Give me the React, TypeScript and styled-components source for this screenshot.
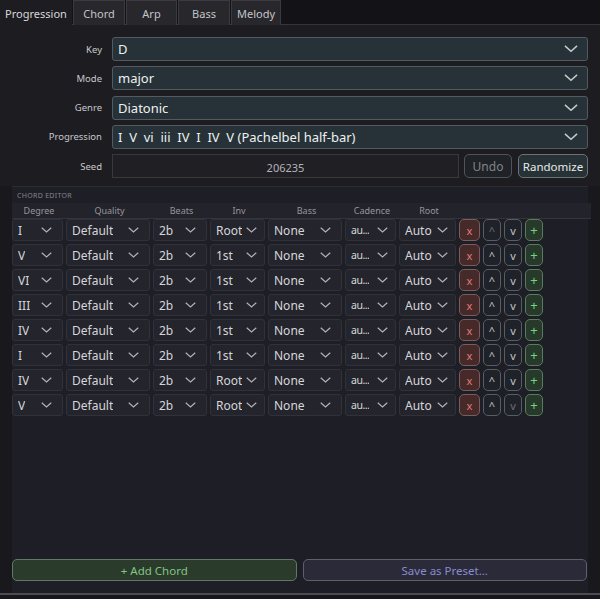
import { Fragment } from 'react';
import styled, { createGlobalStyle } from 'styled-components';

const GlobalStyle = createGlobalStyle`
    html, body {
        margin: 0;
        padding: 0;
        background: #18181c;
    }
    * {
        box-sizing: border-box;
    }
`;

const Window = styled.div`
    width: 600px;
    height: 599px;
    display: flex;
    flex-direction: column;
    background: #18181c;
    font-family: "Noto Sans", "Open Sans", sans-serif;
    overflow: hidden;
`;

const TabBar = styled.div`
    height: 25px;
    display: flex;
    background: #131317;
    border-bottom: 1px solid #34343a;
`;

const Tab = styled.div<{ $active?: boolean; $w: number }>`
    width: ${(p) => p.$w}px;
    height: 25px;
    margin-right: 1px;
    display: flex;
    align-items: center;
    justify-content: center;
    font-size: 11px;
    color: ${(p) => (p.$active ? '#d8d8dc' : '#c4c4c8')};
    background: ${(p) => (p.$active ? '#1c1c21' : '#27272c')};
    border: 1px solid ${(p) => (p.$active ? '#1c1c21' : '#3a3a40')};
    border-bottom: none;
`;

const Body = styled.div`
    flex: 1;
    display: flex;
    flex-direction: column;
    background: #19191d;
    border-bottom: 2px solid #4c4c52;
    margin-bottom: 4px;
`;

const Form = styled.div`
    display: grid;
    grid-template-columns: 102px 1fr;
    column-gap: 10px;
    row-gap: 5.25px;
    padding: 12px 12px 8px 0;
    background: #1c1c21;
`;

const Label = styled.div`
    display: flex;
    align-items: center;
    justify-content: flex-end;
    height: 24px;
    font-size: 9.5px;
    color: #c8c8cc;
`;

const SelectBox = styled.div`
    height: 24px;
    display: flex;
    align-items: center;
    justify-content: space-between;
    padding: 0 9px 0 5px;
    background: #263238;
    border: 1px solid #525a62;
    border-radius: 3px;
    font-size: 13px;
    color: #eef0f0;
`;

const SelectText = styled.span`
    white-space: pre;
`;

const SeedRow = styled.div`
    display: flex;
    gap: 5px;
    height: 24px;
`;

const SeedInput = styled.div`
    width: 347px;
    display: flex;
    align-items: center;
    justify-content: center;
    padding-top: 3px;
    background: #1f1f24;
    border: 1px solid #38383e;
    font-size: 11px;
    color: #b4b4b8;
`;

const SmallButton = styled.div<{ $w: number; $primary?: boolean }>`
    width: ${(p) => p.$w}px;
    margin-left: ${(p) => (p.$primary ? '1px' : '0')};
    display: flex;
    align-items: center;
    justify-content: center;
    border-radius: 5px;
    font-size: ${(p) => (p.$primary ? '11.5px' : '12px')};
    background: ${(p) => (p.$primary ? '#263236' : '#1f2226')};
    border: 1px solid ${(p) => (p.$primary ? '#6a7276' : '#4e5458')};
    color: ${(p) => (p.$primary ? '#e8eaea' : '#80868a')};
`;

const Editor = styled.div`
    flex: 1;
    margin: 0 12px;
    display: flex;
    flex-direction: column;
    background: #1e1e26;
    border-top: 1px solid #2c2c33;
`;

const EditorTitle = styled.div`
    height: 16px;
    padding: 4px 0 0 5px;
    font-size: 7px;
    letter-spacing: 0.3px;
    color: #85858c;
`;

const Grid = styled.div`
    display: grid;
    grid-template-columns: 51px 84px 54px 55px 74px 51px 57px auto;
    column-gap: 3px;
    row-gap: 3px;
`;

const Row = styled.div`
    display: contents;
`;

const HeaderCell = styled.div`
    height: 16px;
    margin-right: -3px;
    margin-bottom: -3px;
    display: flex;
    align-items: center;
    justify-content: center;
    font-size: 9px;
    color: #96969c;
    background: #23232b;
    border-bottom: 1px solid #34343c;
`;

const Cell = styled.div<{ $tight?: boolean }>`
    height: 22px;
    display: flex;
    align-items: center;
    justify-content: space-between;
    padding: 0 ${(p) => (p.$tight ? 7 : 10)}px 0 5px;
    background: #24242c;
    border: 1px solid #31313a;
    border-radius: 3px;
    font-size: 12px;
    color: #d6d6da;
    white-space: nowrap;
    overflow: hidden;
`;

const CellText = styled.span<{ $small?: boolean }>`
    overflow: hidden;
    font-size: ${(p) => (p.$small ? '10.5px' : 'inherit')};
    letter-spacing: ${(p) => (p.$small ? '-0.5px' : '0')};
`;

const Actions = styled.div`
    display: flex;
    gap: 3px;
`;

type Kind = 'del' | 'move' | 'add';

const ActionButton = styled.div<{ $kind: Kind; $dim?: boolean; $w: number }>`
    width: ${(p) => p.$w}px;
    height: 22px;
    display: flex;
    align-items: center;
    justify-content: center;
    border-radius: 5px;
    font-size: ${(p) => (p.$kind === 'add' ? '13px' : '11px')};
    background: ${(p) => (p.$kind === 'del' ? '#462a2a' : p.$kind === 'add' ? '#27392a' : '#20222a')};
    border: 1px solid ${(p) => (p.$kind === 'del' ? '#7a5c5c' : p.$kind === 'add' ? '#5c7a5e' : '#585c64')};
    color: ${(p) =>
        p.$kind === 'del' ? '#e47a72' : p.$kind === 'add' ? '#72d67a' : p.$dim ? '#6a6e74' : '#c2c4c8'};
`;

const Spacer = styled.div`
    flex: 1;
`;

const Footer = styled.div`
    display: flex;
    gap: 6px;
    padding: 0 0 12px 0;
`;

const FooterButton = styled.div<{ $variant: 'add' | 'save' }>`
    flex: 1;
    height: 22px;
    display: flex;
    align-items: center;
    justify-content: center;
    border-radius: 5px;
    font-size: 11.5px;
    background: ${(p) => (p.$variant === 'add' ? '#2a3a2b' : '#2a2a38')};
    border: 1px solid ${(p) => (p.$variant === 'add' ? '#64766a' : '#5e5e6c')};
    color: ${(p) => (p.$variant === 'add' ? '#84c484' : '#8a8ad0')};
    margin-right: ${(p) => (p.$variant === 'save' ? '1px' : '0')};
`;

const Chevron = ({ size = 11 }: { size?: number }) => (
    <svg width={size} height={size * 0.55} viewBox="0 0 12 6.6" style={{ flexShrink: 0 }}>
        <polyline points="0.8,0.8 6,5.4 11.2,0.8" fill="none" stroke="currentColor" strokeWidth="1.3" opacity="0.8" />
    </svg>
);

const tabs = [
    { name: 'Progression', w: 72 },
    { name: 'Chord', w: 52 },
    { name: 'Arp', w: 51 },
    { name: 'Bass', w: 52 },
    { name: 'Melody', w: 50 },
];

const fields = [
    { label: 'Key', value: 'D' },
    { label: 'Mode', value: 'major' },
    { label: 'Genre', value: 'Diatonic' },
    { label: 'Progression', value: 'I  V  vi  iii  IV  I  IV  V (Pachelbel half-bar)' },
];

const headers = ['Degree', 'Quality', 'Beats', 'Inv', 'Bass', 'Cadence', 'Root', ''];

const chords = [
    { deg: 'I', beats: '2b', inv: 'Root' },
    { deg: 'V', beats: '2b', inv: '1st' },
    { deg: 'VI', beats: '2b', inv: '1st' },
    { deg: 'III', beats: '2b', inv: '1st' },
    { deg: 'IV', beats: '2b', inv: '1st' },
    { deg: 'I', beats: '2b', inv: '1st' },
    { deg: 'IV', beats: '2b', inv: 'Root' },
    { deg: 'V', beats: '2b', inv: 'Root' },
];

export default function App() {
    return (
        <Window>
            <GlobalStyle />
            <TabBar>
                {tabs.map((t, i) => (
                    <Tab key={t.name} $w={t.w} $active={i === 0}>
                        {t.name}
                    </Tab>
                ))}
            </TabBar>
            <Body>
                <Form>
                    {fields.map((f) => (
                        <Fragment key={f.label}>
                            <Label>{f.label}</Label>
                            <SelectBox>
                                <SelectText>{f.value}</SelectText>
                                <Chevron size={14} />
                            </SelectBox>
                        </Fragment>
                    ))}
                    <Label>Seed</Label>
                    <SeedRow>
                        <SeedInput>206235</SeedInput>
                        <SmallButton $w={48}>Undo</SmallButton>
                        <SmallButton $w={70} $primary>
                            Randomize
                        </SmallButton>
                    </SeedRow>
                </Form>
                <Editor>
                    <EditorTitle>CHORD EDITOR</EditorTitle>
                    <Grid>
                        <Row>
                            {headers.map((h, i) => (
                                <HeaderCell key={i}>{h}</HeaderCell>
                            ))}
                        </Row>
                        {chords.map((c, i) => (
                            <Row key={i}>
                                <Cell>
                                    <CellText>{c.deg}</CellText>
                                    <Chevron />
                                </Cell>
                                <Cell>
                                    <CellText>Default</CellText>
                                    <Chevron />
                                </Cell>
                                <Cell>
                                    <CellText>{c.beats}</CellText>
                                    <Chevron />
                                </Cell>
                                <Cell $tight>
                                    <CellText>{c.inv}</CellText>
                                    <Chevron />
                                </Cell>
                                <Cell>
                                    <CellText>None</CellText>
                                    <Chevron />
                                </Cell>
                                <Cell $tight>
                                    <CellText $small>au...</CellText>
                                    <Chevron />
                                </Cell>
                                <Cell $tight>
                                    <CellText>Auto</CellText>
                                    <Chevron />
                                </Cell>
                                <Actions>
                                    <ActionButton $kind="del" $w={21}>x</ActionButton>
                                    <ActionButton $kind="move" $w={18} $dim={i === 0}>^</ActionButton>
                                    <ActionButton $kind="move" $w={18} $dim={i === chords.length - 1}>v</ActionButton>
                                    <ActionButton $kind="add" $w={18}>+</ActionButton>
                                </Actions>
                            </Row>
                        ))}
                    </Grid>
                    <Spacer />
                    <Footer>
                        <FooterButton $variant="add">+ Add Chord</FooterButton>
                        <FooterButton $variant="save">Save as Preset...</FooterButton>
                    </Footer>
                </Editor>
            </Body>
        </Window>
    );
}
